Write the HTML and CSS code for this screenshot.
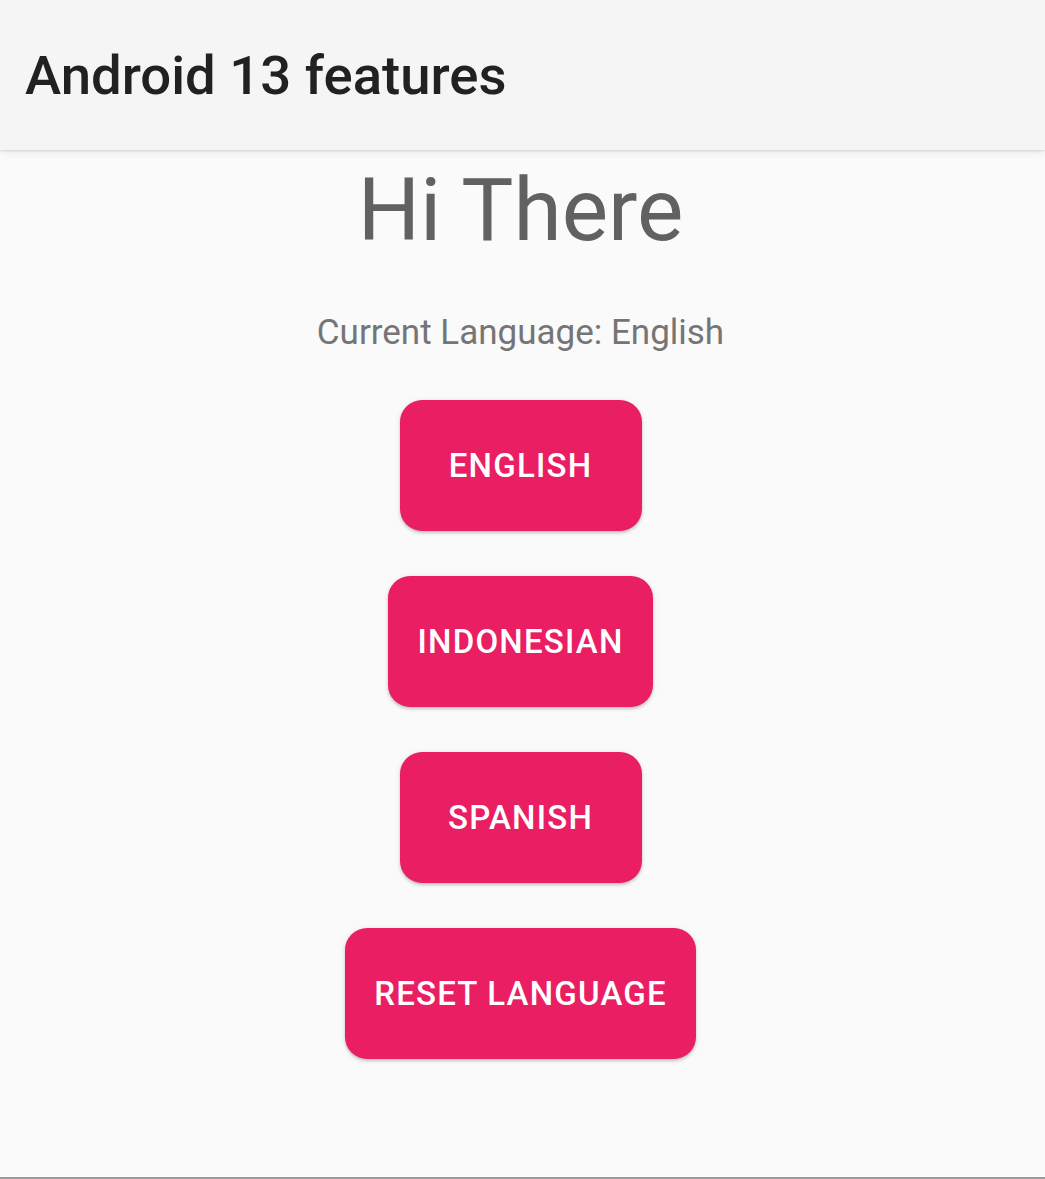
FILE: index.html
```html
<!DOCTYPE html>
<html>
<head>
<meta charset="utf-8">
<title>Android 13 features</title>
<link rel="stylesheet" href="styles.css">
</head>
<body>
<div class="screen">
  <header class="appbar">
    <h1 class="appbar-title">Android 13 features</h1>
  </header>
  <main class="content">
    <div class="greeting">Hi There</div>
    <div class="current">Current Language: English</div>
    <div class="buttons">
      <button class="btn">ENGLISH</button>
      <button class="btn">INDONESIAN</button>
      <button class="btn">SPANISH</button>
      <button class="btn">RESET LANGUAGE</button>
    </div>
  </main>
  <div class="bottom-edge"></div>
</div>
</body>
</html>
```
FILE: styles.css
```css
html, body {
  margin: 0;
  padding: 0;
  height: 100%;
}
body {
  background: #fafafa;
  font-family: Roboto, "Noto Sans", sans-serif;
}
.screen {
  display: flex;
  flex-direction: column;
  height: 100vh;
}
.appbar {
  height: 150px;
  flex: 0 0 150px;
  background: #f5f5f5;
  display: flex;
  align-items: center;
  padding-left: 25px;
  box-sizing: border-box;
  box-shadow: 0 1px 2px rgba(0,0,0,0.12), 0 3px 8px rgba(0,0,0,0.06);
  position: relative;
  z-index: 1;
}
.appbar-title {
  margin: 0;
  font-size: 54.5px;
  line-height: 1;
  font-weight: 500;
  color: #212121;
  letter-spacing: 0;
}
.content {
  flex: 1;
  display: flex;
  flex-direction: column;
  align-items: center;
  padding-right: 4px;
}
.greeting {
  margin-top: 16px;
  font-size: 87.5px;
  line-height: 89px;
  color: #616161;
}
.current {
  margin-top: 60px;
  font-size: 35px;
  line-height: 35px;
  color: #757575;
}
.buttons {
  margin-top: 50px;
  display: flex;
  flex-direction: column;
  align-items: center;
  gap: 45px;
}
.btn {
  height: 131px;
  min-width: 242px;
  padding: 0 29px;
  border: none;
  border-radius: 22px;
  background: #e91e63;
  color: #fff;
  font-family: Roboto, "Noto Sans", sans-serif;
  font-size: 33px;
  font-weight: 500;
  letter-spacing: 1.2px;
  box-shadow: 0 2px 3px rgba(0,0,0,0.18), 0 1px 6px rgba(0,0,0,0.08);
  display: flex;
  align-items: center;
  justify-content: center;
}
.bottom-edge {
  flex: 0 0 2px;
  background: #9a9a9a;
}
```
